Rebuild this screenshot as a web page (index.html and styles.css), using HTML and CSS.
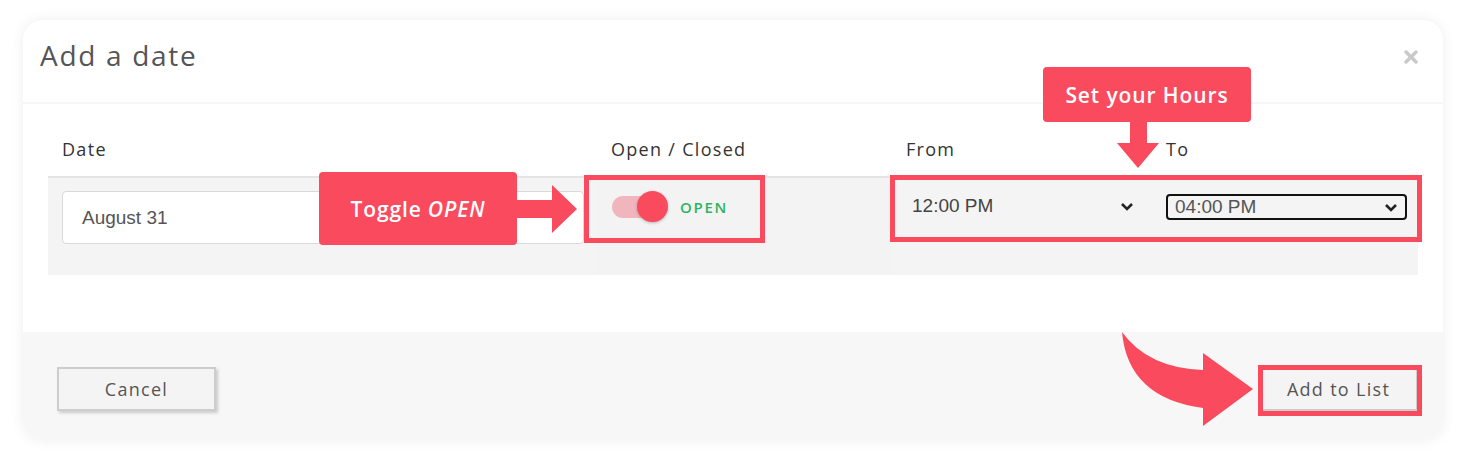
FILE: index.html
```html
<!DOCTYPE html>
<html>
<head>
    <title>Add a date</title>
    <meta name="viewport" content="width=device-width, initial-scale=1.0">
    <link rel="stylesheet" href="styles.css">
</head>
<body>
    <div class='page'>
        <div class='modal'>
            <div class='modal-header'>
                <h2>Add a date</h2>
                <svg class='close' width='14' height='14' viewBox='0 0 14 14'>
                    <path d='M2 2 L12 12 M12 2 L2 12' stroke='#c9c9c9' stroke-width='3.4' stroke-linecap='round'/>
                </svg>
            </div>

            <div class='modal-body'>
                <div class='grid-row labels'>
                    <div class='cell c1'>Date</div>
                    <div class='cell c2'>Open / Closed</div>
                    <div class='cell c3'>From</div>
                    <div class='cell c4'>To</div>
                </div>
                <div class='grid-row data'>
                    <div class='cell c1'>
                        <div class='date-input'>August 31</div>
                    </div>
                    <div class='cell c2'>
                        <div class='toggle'>
                            <span class='track'></span>
                            <span class='knob'></span>
                        </div>
                        <span class='state'>OPEN</span>
                    </div>
                    <div class='cell c3'>
                        <div class='select plain'>
                            <span>12:00 PM</span>
                            <svg width='14' height='9' viewBox='0 0 14 9'><polyline points='2,2 7,7 12,2' fill='none' stroke='#222' stroke-width='2.6'/></svg>
                        </div>
                    </div>
                    <div class='cell c4'>
                        <div class='select focused'>
                            <span>04:00 PM</span>
                            <svg width='14' height='9' viewBox='0 0 14 9'><polyline points='2,2 7,7 12,2' fill='none' stroke='#222' stroke-width='2.6'/></svg>
                        </div>
                    </div>
                </div>
            </div>

            <div class='modal-footer'>
                <button class='button'>Cancel</button>
                <button class='button'>Add to List</button>
            </div>
        </div>
    </div>

    <!-- annotations drawn over the screenshot -->
    <div class='mark mark-toggle'></div>
    <div class='mark mark-hours'></div>
    <div class='mark mark-add'></div>

    <div class='callout callout-toggle'>Toggle <em>OPEN</em></div>
    <svg class='arrow arrow-right' width='62' height='48' viewBox='0 0 62 48'>
        <path d='M0 15 L36 15 L36 0 L61 24 L36 48 L36 33 L0 33 Z' fill='#f94a5e'/>
    </svg>

    <div class='callout callout-hours'>Set your Hours</div>
    <svg class='arrow arrow-down' width='44' height='48' viewBox='0 0 44 48'>
        <path d='M14 0 L31 0 L31 22 L43 22 L22 47 L1 22 L14 22 Z' fill='#f94a5e'/>
    </svg>

    <svg class='arrow arrow-curve' width='134' height='96' viewBox='1120 331 134 96'>
        <path d='M1122 332 Q1148 368 1203 370 L1203 353 L1253 389 L1203 426 L1203 408 Q1128 398 1122 332 Z' fill='#f94a5e'/>
    </svg>
</body>
</html>
```

FILE: styles.css
```css
html {
    font-family: 'Open Sans', sans-serif;
}
body {
    margin: 0;
    background: #ffffff;
    position: relative;
}
.page {
    padding: 20px 21px 21px 23px;
}
.modal {
    width: 1420px;
    height: 420px;
    background: #fff;
    border-radius: 20px;
    box-shadow: 0 0 14px rgba(0, 0, 0, 0.07);
    display: flex;
    flex-direction: column;
}
.modal-header {
    height: 82px;
    border-bottom: 2px solid #f6f6f6;
    display: flex;
    align-items: center;
    justify-content: space-between;
    padding: 0 25px 0 17px;
}
.modal-header h2 {
    margin: 0;
    font-size: 28px;
    font-weight: 500;
    color: #555;
    letter-spacing: 1.7px;
    margin-top: -12px;
}
.close {
    margin-top: -8px;
}
.modal-body {
    height: 228px;
    padding: 0 25px;
}
.grid-row {
    display: grid;
    grid-template-columns: 549px 296px 262px 263px;
}
.labels {
    height: 72px;
    align-items: end;
    font-size: 18px;
    letter-spacing: 1.3px;
    color: #333;
}
.labels .cell {
    padding-bottom: 15px;
}
.c1 { padding-left: 14px; }
.c2 { padding-left: 14px; }
.c3 { padding-left: 13px; }
.c4 { padding-left: 11px; }
.data {
    height: 97px;
    border-top: 2px solid #e4e4e4;
    background: #f4f4f4;
}
.data .cell {
    padding-top: 13px;
}
.data .c2 {
    background: #f3f3f3;
    display: flex;
    align-items: flex-start;
    padding-top: 12px;
}
.data .c1 {
    padding-right: 13px;
}
.date-input {
    height: 53px;
    box-sizing: border-box;
    background: #fff;
    border: 1px solid #d9d9d9;
    border-radius: 4px;
    padding-left: 19px;
    display: flex;
    align-items: center;
    font-family: 'Liberation Sans', Arial, sans-serif;
    font-size: 19px;
    color: #555;
}
.toggle {
    position: relative;
    width: 57px;
    height: 32px;
    margin-left: 1px;
}
.track {
    position: absolute;
    left: 0;
    top: 6px;
    width: 48px;
    height: 22px;
    border-radius: 11px;
    background: #f1b6bd;
}
.knob {
    position: absolute;
    left: 25px;
    top: 1px;
    width: 31px;
    height: 31px;
    border-radius: 50%;
    background: #f94a5e;
    box-shadow: 0 1px 3px rgba(0, 0, 0, 0.25);
}
.state {
    margin-left: 11px;
    margin-top: 7px;
    font-size: 15px;
    font-weight: 600;
    color: #2eb362;
    letter-spacing: 1.7px;
}
.select {
    display: flex;
    align-items: center;
    justify-content: space-between;
    font-family: 'Liberation Sans', Arial, sans-serif;
    font-size: 19px;
    color: #444;
}
.select.plain {
    height: 30px;
    padding: 0 21px 0 6px;
}
.select.focused {
    height: 26px;
    box-sizing: border-box;
    width: 241px;
    border: 2px solid #111;
    border-radius: 4px;
    padding: 0 7px 0 7px;
    margin-top: 3px;
    background: #f4f4f4;
    color: #555;
}
.modal-footer {
    flex: 1;
    background: #f7f7f7;
    border-radius: 0 0 20px 20px;
    display: flex;
    align-items: center;
    justify-content: space-between;
    padding: 0 25px 0 34px;
}
.button {
    width: 159px;
    height: 44px;
    border: 2px solid #cdcdcd;
    background: #f4f4f4;
    font-family: 'Open Sans', sans-serif;
    font-size: 18px;
    letter-spacing: 1.3px;
    color: #555;
    box-shadow: 2px 2px 3px rgba(0, 0, 0, 0.18);
    cursor: pointer;
    margin-top: 5px;
}

/* annotations */
.mark {
    position: absolute;
    border: 5px solid #f94a5e;
    box-sizing: border-box;
}
.mark-toggle {
    left: 584px;
    top: 175px;
    width: 181px;
    height: 68px;
}
.mark-hours {
    left: 890px;
    top: 175px;
    width: 532px;
    height: 67px;
}
.mark-add {
    left: 1258px;
    top: 365px;
    width: 164px;
    height: 51px;
}
.callout {
    position: absolute;
    background: #f94a5e;
    color: #fff;
    border-radius: 4px;
    font-family: 'Open Sans', sans-serif;
    font-weight: 600;
    font-size: 21px;
    letter-spacing: 0.9px;
    display: flex;
    align-items: center;
    justify-content: center;
}
.callout em {
    margin-left: 6px;
}
.callout-toggle {
    left: 319px;
    top: 172px;
    width: 198px;
    height: 73px;
}
.callout-hours {
    left: 1043px;
    top: 67px;
    width: 208px;
    height: 55px;
}
.arrow {
    position: absolute;
}
.arrow-right {
    left: 516px;
    top: 185px;
}
.arrow-down {
    left: 1116px;
    top: 121px;
}
.arrow-curve {
    left: 1120px;
    top: 331px;
}
```
